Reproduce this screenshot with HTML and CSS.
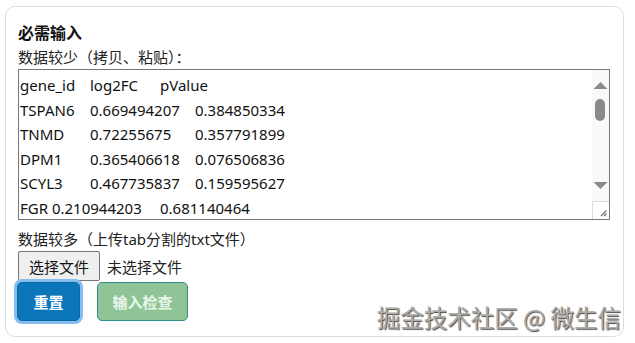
FILE: index.html
```html
<!DOCTYPE html>
<html lang="zh-CN">
<head>
    <meta charset="UTF-8">
    <meta name="viewport" content="width=device-width, initial-scale=1.0">
    <title>必需输入</title>
    <link rel="stylesheet" href="styles.css">
</head>
<body>
    <div class="card">
        <h3 class="card-title">必需输入</h3>
        <label class="field-label" for="pasteData">数据较少（拷贝、粘贴）：</label>
        <div class="paste-wrap">
            <textarea class="paste-area" id="pasteData" spellcheck="false">gene_id	log2FC	pValue
TSPAN6	0.669494207	0.384850334
TNMD	0.72255675	0.357791899
DPM1	0.365406618	0.076506836
SCYL3	0.467735837	0.159595627
FGR 0.210944203	0.681140464
CFH	0.532187404	0.244176310
FUCA2	0.118903657	0.902145533
GCLC	0.741208896	0.035911247
NFYA	0.289461035	0.517300428
STPG1	0.604937712	0.128864059
NIPAL3	0.387054163	0.663248910
LAS1L	0.912573480	0.019447622
ENPP4	0.156820347	0.745129083
SEMA3F	0.473918825	0.301556794
CFTR	0.821406571	0.054980316
ANKIB1	0.260373918	0.448812075
CYP51A1	0.695217740	0.091038652
KRIT1	0.348760192	0.587124473
RAD52	0.574193206	0.213697740
MYH16	0.132958614	0.826051932
BAD	0.788314069	0.067430158</textarea>
            <!-- scrollbar + resize grip, drawn since the shot hides native ones -->
            <svg class="fake-scroll" width="17" height="149" viewBox="0 0 17 149">
                <rect x="0" y="0" width="17" height="131" fill="#f9f9f9"/>
                <path d="M1.5 19 L8.5 12 L15.5 19 Z" fill="#8a8a8a"/>
                <rect x="3" y="29" width="10" height="22" rx="5" fill="#8a8a8a"/>
                <path d="M1.5 112 L15.5 112 L8.5 119 Z" fill="#8a8a8a"/>
                <rect x="0" y="131" width="17" height="18" fill="#fff"/>
                <path d="M0.5 149 V131.5 H17" fill="none" stroke="#dcdcdc"/>
                <path d="M9 146 L14.5 140.5 M12 146 L14.5 143.5" stroke="#6e6e6e" stroke-width="1.2"/>
            </svg>
        </div>

        <label class="field-label more" for="fileData">数据较多（上传tab分割的txt文件）</label>
        <div class="file-row">
            <button class="file-button" type="button" id="fileData">选择文件</button>
            <span class="file-name">未选择文件</span>
        </div>

        <div class="actions">
            <button class="btn btn-reset" type="button">重置</button>
            <button class="btn btn-check" type="button">输入检查</button>
        </div>

        <div class="watermark">掘金技术社区 @ 微生信</div>
    </div>
</body>
</html>
```

FILE: styles.css
```css
body {
    margin: 0;
    padding: 6px 0 0 5px;
    font-family: "Noto Sans", "Noto Sans CJK SC", sans-serif;
    color: #212529;
    background: #fff;
}
.card {
    position: relative;
    box-sizing: border-box;
    width: 619px;
    height: 331px;
    border: 1px solid #dedede;
    border-radius: 10px;
    padding: 14px 12px 0 12px;
}
.card-title {
    margin: 0;
    font-size: 16px;
    font-weight: bold;
    line-height: 24px;
    color: #111;
}
.field-label {
    display: block;
    font-size: 15px;
    line-height: 24px;
    color: #222;
}
.field-label.more {
    margin-top: 7px;
}
.paste-wrap {
    position: relative;
    width: 592px;
    height: 151px;
}
.paste-area {
    display: block;
    box-sizing: border-box;
    width: 592px;
    height: 151px;
    margin: 0;
    padding: 3px 20px 3px 1px;
    border: 1px solid #767676;
    border-radius: 0;
    font-family: "Noto Sans", "Noto Sans CJK SC", sans-serif;
    font-size: 15px;
    line-height: 24.6px;
    color: #111;
    tab-size: 35px;
    -moz-tab-size: 35px;
    white-space: pre;
    overflow: hidden;
    resize: none;
    outline: none;
}
.fake-scroll {
    position: absolute;
    top: 1px;
    right: 1px;
    display: block;
}
.file-row {
    display: flex;
    align-items: center;
    gap: 7px;
    height: 30px;
}
.file-button {
    box-sizing: border-box;
    height: 30px;
    width: 82px;
    padding: 0;
    border: 1px solid #767676;
    border-radius: 2px;
    background: #efefef;
    font-family: "Noto Sans", "Noto Sans CJK SC", sans-serif;
    font-size: 15px;
    color: #111;
}
.file-name {
    font-size: 15px;
    color: #222;
}
.actions {
    display: flex;
    gap: 17px;
    margin-top: 1px;
}
.btn {
    box-sizing: border-box;
    height: 39px;
    border-radius: 5px;
    font-family: "Noto Sans", "Noto Sans CJK SC", sans-serif;
    font-size: 15px;
    font-weight: bold;
}
.btn-reset {
    width: 63px;
    margin-left: -1px;
    border: 1px solid #0a6aa6;
    background: #0b76ba;
    color: #fff;
    box-shadow: 0 0 0 3px #86bdf0;
}
.btn-check {
    width: 91px;
    border: 1px solid #2e8f8a;
    background: #8fc596;
    color: #e9f6ea;
}
.watermark {
    position: absolute;
    right: 2px;
    bottom: 4px;
    font-family: "Noto Sans CJK SC", sans-serif;
    font-size: 23.5px;
    line-height: 30px;
    color: #ababab;
    text-shadow: 1px 1px 1px #4a4a4a;
    white-space: nowrap;
}
```
